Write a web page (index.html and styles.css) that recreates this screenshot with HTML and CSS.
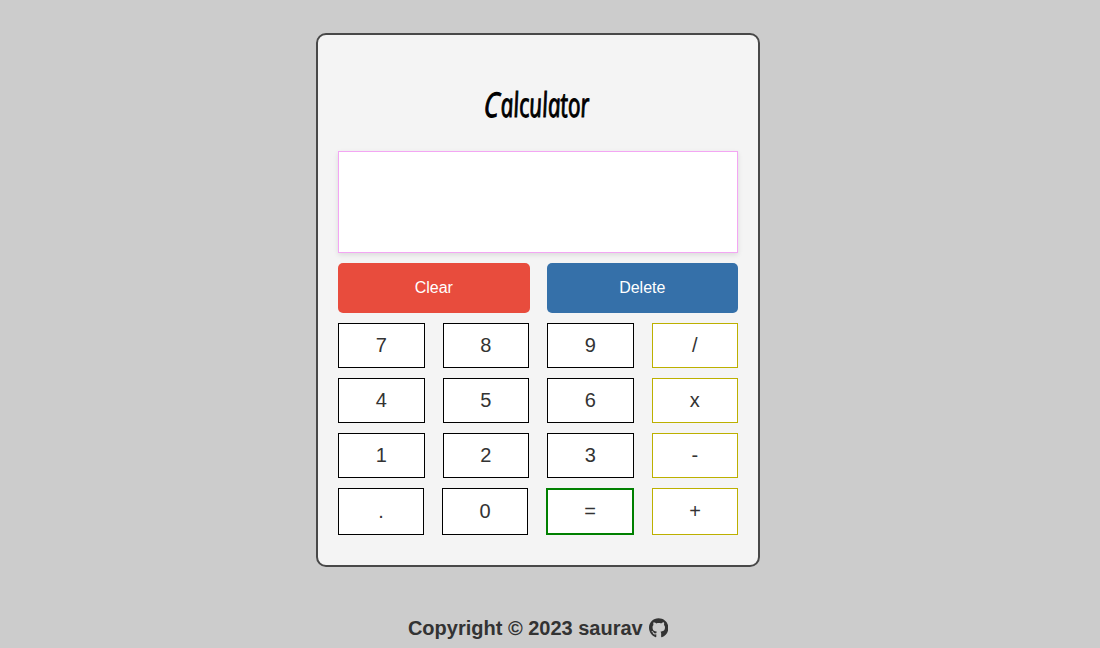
FILE: index.html
```html
<!DOCTYPE html>
<html lang="en">
<head>
<meta charset="utf-8">
<title>Calculator</title>
<link rel="stylesheet" href="styles.css">
</head>
<body>
<main class="calculator">
  <h1 class="title"><span class="title-text"><span class="initial">C</span>alculator</span></h1>
  <div class="display"></div>
  <div class="row">
    <button class="action clear">Clear</button>
    <button class="action delete">Delete</button>
  </div>
  <div class="row">
    <button class="key">7</button>
    <button class="key">8</button>
    <button class="key">9</button>
    <button class="key operator">/</button>
  </div>
  <div class="row">
    <button class="key">4</button>
    <button class="key">5</button>
    <button class="key">6</button>
    <button class="key operator">x</button>
  </div>
  <div class="row">
    <button class="key">1</button>
    <button class="key">2</button>
    <button class="key">3</button>
    <button class="key operator">-</button>
  </div>
  <div class="row last">
    <button class="key">.</button>
    <button class="key">0</button>
    <button class="key equals">=</button>
    <button class="key operator">+</button>
  </div>
</main>
<footer class="footer">
  <span>Copyright © 2023 saurav</span>
  <svg class="github" viewBox="0 0 496 512" aria-hidden="true"><path fill="currentColor" d="M165.9 397.4c0 2-2.3 3.600-5.200 3.600-3.300.3-5.600-1.300-5.600-3.600 0-2 2.300-3.600 5.200-3.600 3-.3 5.600 1.300 5.600 3.600zm-31.100-4.500c-.7 2 1.300 4.300 4.300 4.900 2.600 1 5.600 0 6.200-2s-1.300-4.300-4.300-5.200c-2.600-.7-5.500.3-6.200 2.300zm44.200-1.700c-2.900.7-4.900 2.600-4.600 4.900.3 2 2.900 3.300 5.900 2.600 2.900-.7 4.900-2.600 4.600-4.600-.3-1.900-3-3.200-5.900-2.900zM244.800 8C106.100 8 0 113.300 0 252c0 110.900 69.800 205.800 169.500 239.200 12.800 2.300 17.300-5.600 17.300-12.100 0-6.200-.3-40.400-.3-61.400 0 0-70 15-84.700-29.800 0 0-11.400-29.100-27.800-36.600 0 0-22.900-15.700 1.600-15.400 0 0 24.900 2 38.600 25.800 21.900 38.600 58.600 27.500 72.900 20.900 2.300-16 8.800-27.100 16-33.700-55.900-6.200-112.300-14.300-112.300-110.500 0-27.500 7.600-41.300 23.600-58.900-2.600-6.500-11.100-33.300 2.600-67.900 20.900-6.500 69 27 69 27 20-5.600 41.500-8.500 62.800-8.500s42.800 2.900 62.800 8.500c0 0 48.100-33.600 69-27 13.700 34.700 5.200 61.400 2.600 67.900 16 17.700 25.800 31.500 25.800 58.900 0 96.500-58.900 104.200-114.800 110.500 9.200 7.900 17 22.900 17 46.400 0 33.700-.3 75.400-.3 83.600 0 6.500 4.600 14.400 17.300 12.100C428.200 457.800 496 362.900 496 252 496 113.300 383.500 8 244.800 8z"/></svg>
</footer>
</body>
</html>
```
FILE: styles.css
```css
* { box-sizing: border-box; }
body {
  margin: 0;
  height: 648px;
  overflow: hidden;
  padding: 33px 24px 0 0;
  display: flex;
  flex-direction: column;
  align-items: center;
  background: #ccc;
  color: #333;
  font-family: "Liberation Sans", Arial, sans-serif;
}
.calculator {
  width: 444px;
  height: 534px;
  padding: 20px;
  display: flex;
  flex-direction: column;
  gap: 10px;
  border: 2px solid #484848;
  border-radius: 10px;
  background: #f4f4f4;
}
.title {
  height: 86px;
  margin: 0;
  padding-top: 25px;
  display: flex;
  justify-content: center;
  color: #000;
  font: italic 400 34px/48px "Open Sans", sans-serif;
}
.title-text {
  transform: scaleX(.66) skewX(8deg);
  white-space: nowrap;
  -webkit-text-stroke: 1.1px #000;
}
.initial {
  display: inline-block;
  margin-right: 3px;
  transform: scaleX(1.15) skewX(-12deg);
}
.display {
  height: 102px;
  border: 1px solid #f3a6f3;
  background: #fff;
  box-shadow: 0 2px 5px rgba(0, 0, 0, .1);
}
.row { display: flex; justify-content: space-between; }
button { padding: 0; font-family: inherit; }
.action {
  width: 191.5px;
  height: 50px;
  border: 0;
  border-radius: 5px;
  color: #fff;
  font-size: 16px;
}
.clear { background: #e84c3d; }
.delete { background: #3570a9; }
.key {
  width: 86.5px;
  height: 45px;
  border: 1px solid #000;
  background: #fff;
  color: #333;
  font-size: 20px;
}
.operator { border-color: #bcb000; }
.last .key { width: 86px; height: 47px; }
.last .equals { width: 88px; border: 2px solid #008000; }
.footer {
  margin-top: 50px;
  display: flex;
  align-items: center;
  gap: 6px;
  font-size: 20px;
  font-weight: bold;
  line-height: 23px;
}
.github { width: 19.4px; height: 20px; margin-bottom: 2px; }
```
